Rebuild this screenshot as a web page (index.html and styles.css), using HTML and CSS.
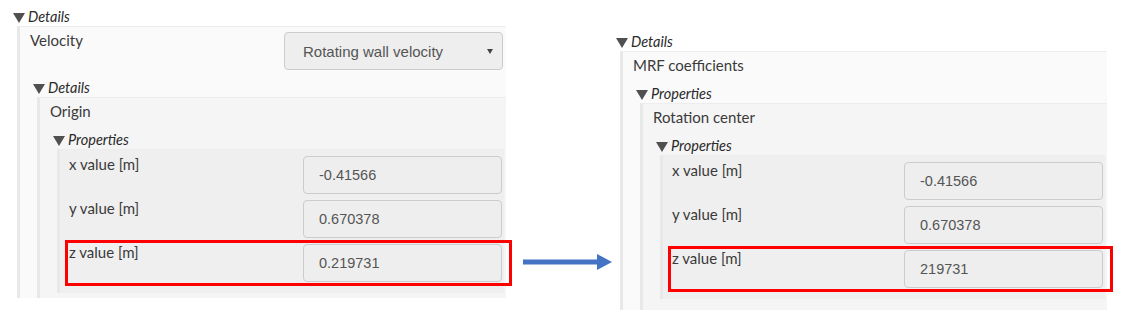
FILE: index.html
```html
<!doctype html>
<html lang="en">

<head>
    <meta charset="UTF-8">
    <link rel="stylesheet" href="styles.css">
    <title>Rotation center fix</title>
</head>

<body>
    <div class="stage">
        <!-- before -->
        <section class="panel">
            <div class="caption">Details</div>
            <div class="box lvl1">
                <div class="row">
                    <span class="label">Velocity</span>
                    <div class="field select">
                        <span>Rotating wall velocity</span>
                        <span class="caret"></span>
                    </div>
                </div>
                <div class="caption sub">Details</div>
                <div class="box lvl2">
                    <div class="row">
                        <span class="label">Origin</span>
                    </div>
                    <div class="caption sub">Properties</div>
                    <div class="box lvl3">
                        <div class="row">
                            <span class="label">x value [m]</span>
                            <input class="field" value="-0.41566" readonly>
                        </div>
                        <div class="row">
                            <span class="label">y value [m]</span>
                            <input class="field" value="0.670378" readonly>
                        </div>
                        <div class="row marked">
                            <span class="label">z value [m]</span>
                            <input class="field" value="0.219731" readonly>
                        </div>
                    </div>
                </div>
            </div>
        </section>

        <svg class="arrow" width="89" height="16" viewBox="0 0 89 16">
            <rect x="0" y="5.5" width="76" height="5" fill="#4472c4"/>
            <polygon points="74,0 89,8 74,16" fill="#4472c4"/>
        </svg>

        <!-- after -->
        <section class="panel panel-right">
            <div class="caption">Details</div>
            <div class="box lvl1">
                <div class="row">
                    <span class="label">MRF coefficients</span>
                </div>
                <div class="caption sub">Properties</div>
                <div class="box lvl2">
                    <div class="row">
                        <span class="label">Rotation center</span>
                    </div>
                    <div class="caption sub">Properties</div>
                    <div class="box lvl3">
                        <div class="row">
                            <span class="label">x value [m]</span>
                            <input class="field" value="-0.41566" readonly>
                        </div>
                        <div class="row">
                            <span class="label">y value [m]</span>
                            <input class="field" value="0.670378" readonly>
                        </div>
                        <div class="row marked">
                            <span class="label">z value [m]</span>
                            <input class="field" value="219731" readonly>
                        </div>
                    </div>
                </div>
            </div>
        </section>
    </div>
</body>

</html>
```

FILE: styles.css
```css
* {
    box-sizing: border-box;
}

body {
    margin: 0;
    background: #fff;
    font-family: Lato, "Noto Sans", sans-serif;
    font-size: 14px;
    color: #3a3a3a;
}

.stage {
    display: flex;
    align-items: flex-start;
    padding: 7px 0 0 13px;
}

.panel {
    width: 493px;
}

.panel-right {
    width: 491px;
    margin-top: 25px;
    margin-left: 4px;
}

.arrow {
    margin: 247px 0 0 17px;
    flex: none;
}

/* collapsible heading with the dark triangle */
.caption {
    display: flex;
    align-items: center;
    height: 19px;
    line-height: 19px;
    font-size: 14.5px;
    font-style: italic;
    color: #2a2a2a;
}

.caption::before {
    content: "";
    margin: 2px 3px 0 0;
    border-left: 6px solid transparent;
    border-right: 6px solid transparent;
    border-top: 10px solid #505050;
}

.caption.sub {
    margin: 7px 0 0 13px;
}

.box {
    margin-left: 4px;
    border-left: 3px solid #e8e8e8;
    border-top: 1px solid #ededed;
}

.box .box {
    margin-left: 17px;
}

.lvl1 {
    background: #fafafa;
}

.lvl2 {
    background: #f5f5f5;
    padding-bottom: 5px;
}

.panel-right .lvl2 {
    padding-bottom: 11px;
}

.lvl3 {
    background: #efefef;
    margin-right: 2px;
    padding: 1px 0 10px;
}

.row {
    display: flex;
    align-items: flex-start;
    padding: 2px 2px 1px 10px;
}

.lvl3 .row {
    padding-left: 9px;
}

.label {
    flex: 1;
    font-size: 15px;
    line-height: 22px;
}

.field {
    width: 199px;
    height: 38px;
    margin: 3px 0 0;
    padding: 0 15px;
    border: 1px solid #ccc;
    border-radius: 4px;
    background: #eee;
    font: 14.5px "Liberation Sans", Arial, sans-serif;
    color: #555;
    outline: none;
}

.select {
    width: 219px;
    margin-right: 1px;
    display: flex;
    align-items: center;
    justify-content: space-between;
    padding: 0 9px 0 18px;
    font-size: 15px;
}

.caret {
    border-left: 3px solid transparent;
    border-right: 3px solid transparent;
    border-top: 5px solid #444;
}

/* red highlight drawn over the z row */
.marked {
    position: relative;
}

.marked::after {
    content: "";
    position: absolute;
    left: 5px;
    right: -8px;
    top: 1px;
    bottom: -3px;
    border: 3px solid #f00;
}
```
